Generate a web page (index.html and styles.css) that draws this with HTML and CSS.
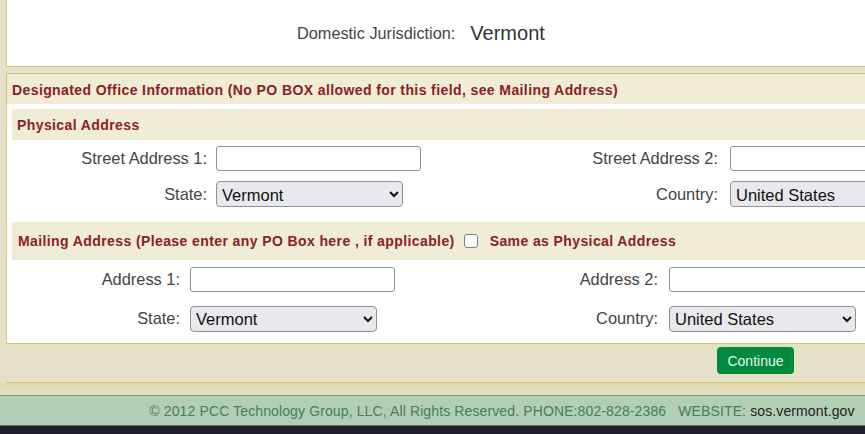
FILE: index.html
```html
<!DOCTYPE html>
<html lang="en">
<head>
    <meta charset="UTF-8">
    <title>Designated Office Information</title>
    <link rel="stylesheet" href="styles.css">
</head>
<body>
    <div class="page">
        <div class="main">
            <div class="top-box">
                <span class="juris-label">Domestic Jurisdiction:</span>
                <span class="juris-value">Vermont</span>
            </div>

            <div class="box">
                <div class="box-title">Designated Office Information (No PO BOX allowed for this field, see Mailing Address)</div>
                <div class="box-body">
                    <div class="section-title">Physical Address</div>
                    <div class="fields physical">
                        <label class="lbl">Street Address 1:</label>
                        <div class="fld"><input type="text" class="txt"></div>
                        <label class="lbl lbl-right">Street Address 2:</label>
                        <div class="fld"><input type="text" class="txt"></div>

                        <label class="lbl">State:</label>
                        <div class="fld">
                            <select class="sel"><option>Vermont</option></select>
                        </div>
                        <label class="lbl lbl-right">Country:</label>
                        <div class="fld">
                            <select class="sel"><option>United States</option></select>
                        </div>
                    </div>

                    <div class="section-title mailing-title">
                        Mailing Address (Please enter any PO Box here , if applicable)
                        <input type="checkbox" class="chk" id="same">
                        <label for="same">Same as Physical Address</label>
                    </div>
                    <div class="fields mailing">
                        <label class="lbl">Address 1:</label>
                        <div class="fld"><input type="text" class="txt"></div>
                        <label class="lbl lbl-right">Address 2:</label>
                        <div class="fld"><input type="text" class="txt"></div>

                        <label class="lbl">State:</label>
                        <div class="fld">
                            <select class="sel"><option>Vermont</option></select>
                        </div>
                        <label class="lbl lbl-right">Country:</label>
                        <div class="fld">
                            <select class="sel"><option>United States</option></select>
                        </div>
                    </div>
                </div>
            </div>

            <div class="actions">
                <button type="button" class="btn">Continue</button>
            </div>
        </div>

        <div class="footer-strip"></div>
        <div class="footer">
            &copy; 2012 PCC Technology Group, LLC, All Rights Reserved. PHONE:802-828-2386 &nbsp; WEBSITE: <a href="#" class="site">sos.vermont.gov</a>
        </div>
        <div class="bottom-bar"></div>
    </div>
</body>
</html>
```

FILE: styles.css
```css
body {
    margin: 0;
    background-color: #e6e0c8;
    font-family: "Liberation Sans", Arial, sans-serif;
    color: #444;
}
.page {
    width: 1004px;
}
.main {
    padding: 0 6px;
}
.top-box {
    height: 66px;
    background-color: #fff;
    border: 1px solid #d6c46c;
    border-top: none;
    display: flex;
    align-items: center;
    padding-left: 290px;
}
.juris-label {
    font-size: 16.3px;
    color: #444;
}
.juris-value {
    font-size: 20px;
    color: #333;
    margin-left: 15px;
}
.box {
    margin-top: 6px;
    background-color: #fff;
    border: 1px solid #d6c46c;
}
.box-title,
.section-title {
    background-color: #f0ecd5;
    color: #8a2222;
    font-weight: bold;
    font-size: 14px;
    letter-spacing: 0.4px;
    display: flex;
    align-items: center;
}
.box-title {
    height: 28px;
    padding: 2px 0 0 5px;
}
.box-body {
    padding: 5px;
}
.section-title {
    height: 31px;
    padding-left: 5px;
}
.mailing-title {
    height: 38px;
    margin-top: 10px;
    padding-left: 6px;
}
.chk {
    appearance: none;
    width: 14px;
    height: 14px;
    margin: 0 12px 0 9px;
    border: 1px solid #808080;
    border-radius: 3px;
    background-color: #fff;
}
.fields {
    display: grid;
    align-items: center;
}
.physical {
    grid-template-columns: 204px 214px 300px auto;
    grid-auto-rows: 36px;
}
.mailing {
    grid-template-columns: 178px 214px 265px auto;
    grid-auto-rows: 39px;
}
.lbl {
    text-align: right;
    font-size: 16.4px;
    color: #444;
    padding-right: 9px;
}
.lbl-right {
    padding-right: 12px;
}
.mailing .lbl {
    padding-right: 10px;
}
.mailing .lbl-right {
    padding-right: 11px;
}
.fld {
    display: flex;
}
.txt {
    width: 205px;
    height: 25px;
    box-sizing: border-box;
    border: 1px solid #8f8f9d;
    border-radius: 3px;
    background-color: #fff;
    margin: 0;
}
.sel {
    width: 187px;
    height: 26px;
    box-sizing: border-box;
    border: 1px solid #8f8f9d;
    border-radius: 4px;
    background-color: #e9e9ed;
    font-family: "Liberation Sans", Arial, sans-serif;
    font-size: 16.5px;
    color: #111;
    margin: 0;
    padding: 1px 0 0 1px;
}
.actions {
    height: 38px;
    display: flex;
    align-items: flex-start;
    padding-left: 711px;
    border-bottom: 1px solid #d6c46c;
}
.btn {
    margin-top: 3px;
    width: 77px;
    height: 27px;
    background-color: #008a3e;
    color: #e8f5ec;
    border: none;
    border-radius: 4px;
    font-family: "Liberation Sans", Arial, sans-serif;
    font-size: 14px;
    cursor: pointer;
}
.footer-strip {
    height: 12px;
    background: linear-gradient(#e6d9a8, #e4e0c8);
    border-bottom: 1px solid #6f9f80;
}
.footer {
    height: 29px;
    background-color: #b2cfb6;
    color: #4b7d5c;
    font-size: 14px;
    letter-spacing: 0.12px;
    display: flex;
    align-items: center;
    justify-content: center;
    border-bottom: 1px solid #5d6e62;
}
.site {
    color: #222;
    text-decoration: none;
    margin-left: 4px;
}
.bottom-bar {
    height: 20px;
    background-color: #1f1f2d;
}
```
